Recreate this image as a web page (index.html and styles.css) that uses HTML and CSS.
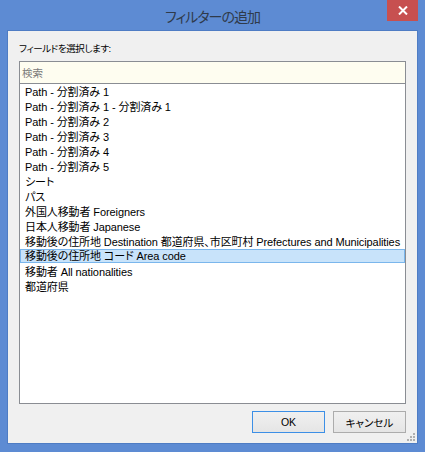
FILE: index.html
```html
<!DOCTYPE html>
<html lang="ja">
<head>
<meta charset="utf-8">
<title>フィルターの追加</title>
<link rel="stylesheet" href="styles.css">
</head>
<body>
<div class="window">
  <div class="titlebar">
    <span class="title">フィルターの追加</span>
    <div class="close">
      <svg width="10" height="9" viewBox="0 0 10 9"><path d="M1 0.5 L9 8.5 M9 0.5 L1 8.5" stroke="#fff" stroke-width="2"/></svg>
    </div>
  </div>
  <div class="client">
    <div class="label">フィールドを選択します:</div>
    <div class="search">検索</div>
    <ul class="list">
      <li>Path - 分割済み 1</li>
      <li>Path - 分割済み 1 - 分割済み 1</li>
      <li>Path - 分割済み 2</li>
      <li>Path - 分割済み 3</li>
      <li>Path - 分割済み 4</li>
      <li>Path - 分割済み 5</li>
      <li>シート</li>
      <li>パス</li>
      <li>外国人移動者 Foreigners</li>
      <li>日本人移動者 Japanese</li>
      <li>移動後の住所地 Destination 都道府県、市区町村 Prefectures and Municipalities</li>
      <li class="selected">移動後の住所地 コード Area code</li>
      <li>移動者 All nationalities</li>
      <li>都道府県</li>
    </ul>
    <div class="buttons">
      <button class="btn default">OK</button>
      <button class="btn">キャンセル</button>
    </div>
    <svg class="grip" width="8" height="8" viewBox="0 0 8 8">
      <rect x="6" y="0" width="2" height="2" fill="#b0b0b0"/>
      <rect x="3" y="3" width="2" height="2" fill="#b0b0b0"/>
      <rect x="6" y="3" width="2" height="2" fill="#b0b0b0"/>
      <rect x="0" y="6" width="2" height="2" fill="#b0b0b0"/>
      <rect x="3" y="6" width="2" height="2" fill="#b0b0b0"/>
      <rect x="6" y="6" width="2" height="2" fill="#b0b0b0"/>
    </svg>
  </div>
</div>
</body>
</html>
```
FILE: styles.css
```css
* { box-sizing: border-box; }
html, body { margin: 0; padding: 0; }
body {
  width: 425px;
  height: 452px;
  overflow: hidden;
  font-family: "Liberation Sans", "Noto Sans CJK JP", sans-serif;
  font-feature-settings: "palt" 1;
  font-size: 11px;
  color: #000;
}
.window {
  position: relative;
  width: 425px;
  height: 452px;
  background: #5d8bd3;
  padding: 0 7px 8px 7px;
  display: flex;
  flex-direction: column;
}
.titlebar {
  height: 30px;
  display: flex;
  align-items: center;
  justify-content: center;
}
.title {
  font-size: 14px;
  color: #2f3a4a;
  letter-spacing: -1px;
  margin-top: 1px;
}
.close {
  position: absolute;
  top: 0;
  right: 7px;
  width: 31px;
  height: 21px;
  background: #c75050;
  display: flex;
  align-items: center;
  justify-content: center;
}
.client {
  position: relative;
  flex: 1;
  background: #f0f0f0;
  border: 1px solid #4e7cc4;
  padding: 10px 11px 10px 11px;
  display: flex;
  flex-direction: column;
}
.label {
  height: 15px;
  line-height: 15px;
  margin-bottom: 5px;
  font-size: 9.5px;
  letter-spacing: -0.4px;
}
.search {
  height: 23px;
  border: 1px solid #8a8d93;
  background: #fefdf0;
  color: #7a7a7a;
  padding-left: 2px;
  line-height: 22px;
  font-size: 10.5px;
}
.list {
  list-style: none;
  margin: 0;
  padding: 0;
  height: 320px;
  border: 1px solid #8a8d93;
  border-top: none;
  background: #fff;
  overflow: hidden;
}
.list li {
  height: 15px;
  line-height: 16px;
  padding-left: 5px;
  white-space: nowrap;
  letter-spacing: -0.1px;
}
.list li.selected {
  background: #c8e3fa;
  border: 1px solid #7ab6ec;
  height: 14px;
  line-height: 13px;
  padding-left: 4px;
  margin-bottom: 1px;
}
.buttons {
  margin-top: 7px;
  display: flex;
  justify-content: flex-end;
  gap: 8px;
}
.btn {
  width: 73px;
  height: 22px;
  font-family: inherit;
  font-size: 10.5px;
  font-feature-settings: "palt" 1;
  color: #000;
  border: 1px solid #acacac;
  background: linear-gradient(#f0f0f0, #e5e5e5);
  padding: 0;
  margin: 0;
}
.btn.default {
  border-color: #3c8fe6;
}
.grip {
  position: absolute;
  right: 2px;
  bottom: 2px;
}
```
